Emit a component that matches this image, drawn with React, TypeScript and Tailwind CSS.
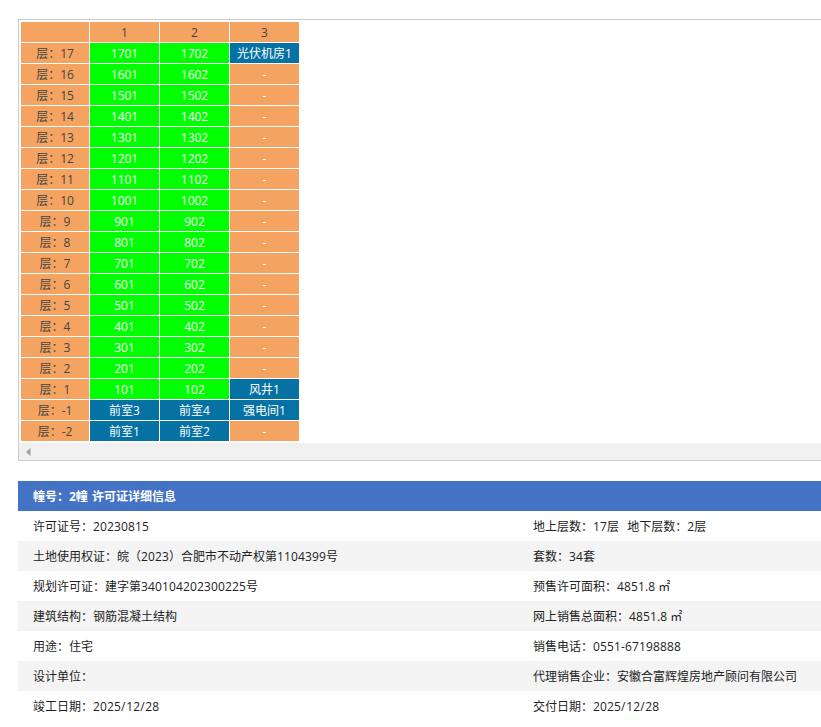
const floors = ["17","16","15","14","13","12","11","10","9","8","7","6","5","4","3","2","1","-1","-2"];

type Kind = "g" | "b" | "e";
function cellsFor(f: string): [string, Kind][] {
  if (f === "17") return [["1701","g"],["1702","g"],["光伏机房1","b"]];
  if (f === "1") return [["101","g"],["102","g"],["风井1","b"]];
  if (f === "-1") return [["前室3","b"],["前室4","b"],["强电间1","b"]];
  if (f === "-2") return [["前室1","b"],["前室2","b"],["-","e"]];
  return [[`${f}01`,"g"],[`${f}02`,"g"],["-","e"]];
}

const kindClass: Record<Kind, string> = {
  g: "bg-[#00ff00] text-white",
  b: "bg-[#0672a3] text-white",
  e: "bg-[#f4a460] text-white",
};

const details: [string, string][] = [
  ["许可证号：20230815", "地上层数：17层\u00a0\u00a0地下层数：2层"],
  ["土地使用权证：皖（2023）合肥市不动产权第1104399号", "套数：34套"],
  ["规划许可证：建字第340104202300225号", "预售许可面积：4851.8 ㎡"],
  ["建筑结构：钢筋混凝土结构", "网上销售总面积：4851.8 ㎡"],
  ["用途：住宅", "销售电话：0551-67198888"],
  ["设计单位：", "代理销售企业：安徽合富辉煌房地产顾问有限公司"],
  ["竣工日期：2025/12/28", "交付日期：2025/12/28"],
];

// Digits in the reference sit on a 7px advance; slashes and clause gaps are a little wider.
function Spaced({ text }: { text: string }) {
  return (
    <>
      {text.split(/(\d+|\u00a0+|\/)/).map((part, i) =>
        /^\d+$/.test(part) ? (
          <span key={i} className="tracking-[0.14px]">{part}</span>
        ) : part.startsWith("\u00a0") ? (
          <span key={i} className="tracking-[1px]">{part}</span>
        ) : part === "/" ? (
          <span key={i} className="tracking-[0.7px]">{part}</span>
        ) : (
          part
        )
      )}
    </>
  );
}

export default function App() {
  return (
    <div className="h-[727px] w-[821px] overflow-hidden bg-white text-[12px] font-['Open_Sans','Noto_Sans_CJK_SC',sans-serif] pt-[19px] pl-[18px]">
      <div className="w-[1000px]">
        <div className="border border-[#cccccc] pl-px pt-px h-[442px] flex flex-col">
          <table className="border-separate border-spacing-[1px] table-fixed w-[280px] text-center text-[12px]">
            <colgroup>
              <col className="w-[68px]" />
              <col className="w-[69px]" />
              <col className="w-[69px]" />
              <col className="w-[69px]" />
            </colgroup>
            <tbody>
              <tr className="h-[20px] bg-[#f4a460] text-[#444444]">
                <td className="p-0 pt-[2px] leading-[18px]"></td>
                <td className="p-0 pt-[2px] leading-[18px]">1</td>
                <td className="p-0 pt-[2px] leading-[18px]">2</td>
                <td className="p-0 pt-[2px] leading-[18px]">3</td>
              </tr>
              {floors.map((f) => (
                <tr key={f} className="h-[20px]">
                  <td className="p-0 pt-[2px] leading-[18px] bg-[#f4a460] text-[#444444]">层：{f}</td>
                  {cellsFor(f).map(([t, k], i) => (
                    <td key={i} className={`p-0 pt-[2px] leading-[18px] ${kindClass[k]}`}>{t}</td>
                  ))}
                </tr>
              ))}
            </tbody>
          </table>
          <div className="mt-auto h-[17px] bg-[#f0f0f0] flex items-center pl-[7px] -ml-px">
            <svg width="5" height="8" viewBox="0 0 5 8"><path d="M4.5 0 L0 4 L4.5 8 Z" fill="#a3a3a3" /></svg>
          </div>
        </div>
        <div className="mt-[20px] h-[30px] pt-[2px] bg-[#4472c4] text-white font-bold flex items-center px-[15px] whitespace-pre">
          幢号：2幢<span className="tracking-[1px]"> </span>许可证详细信息
        </div>
        {details.map(([l, r], i) => (
          <div key={i} className={`grid grid-cols-2 h-[30px] pt-[2px] items-center text-[#222222] ${i % 2 === 1 ? "bg-[#f4f4f4]" : "bg-white"}`}>
            <div className="px-[15px] whitespace-pre"><Spaced text={l} /></div>
            <div className="px-[15px] whitespace-pre"><Spaced text={r} /></div>
          </div>
        ))}
      </div>
    </div>
  );
}
